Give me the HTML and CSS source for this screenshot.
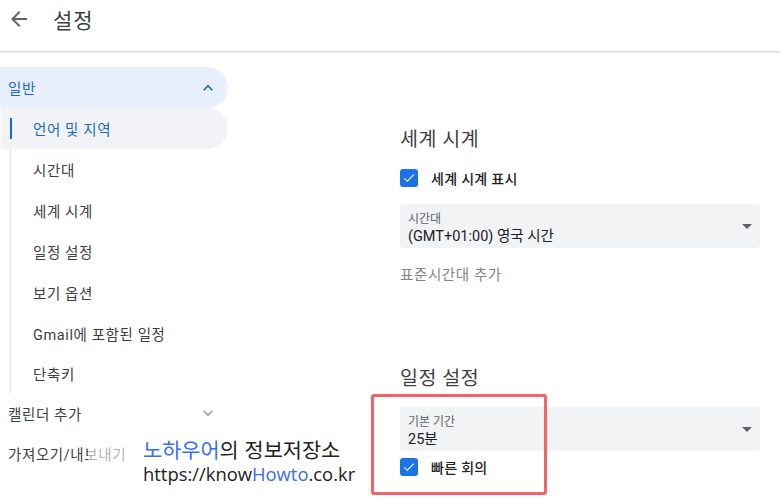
FILE: index.html
```html
<!DOCTYPE html>
<html lang="ko">
<head>
<meta charset="utf-8">
<link rel="stylesheet" href="styles.css">
</head>
<body>
<header class="topbar">
  <svg class="back" width="24" height="24" viewBox="0 0 24 24"><path d="M20 11H7.830l5.590-5.590L12 4l-8 8 8 8 1.410-1.410L7.830 13H20v-2z" fill="#5f6368"/></svg>
  <h1 class="title">설정</h1>
</header>
<div class="layout">
  <nav class="sidebar">
    <div class="group-head active">
      <span>일반</span>
      <svg class="chev" width="20" height="20" viewBox="0 0 24 24"><path d="M7.41 15.41 12 10.83l4.59 4.58L18 14l-6-6-6 6z" fill="#1967d2"/></svg>
    </div>
    <div class="subs">
      <div class="sub current">언어 및 지역</div>
      <div class="sub">시간대</div>
      <div class="sub">세계 시계</div>
      <div class="sub">일정 설정</div>
      <div class="sub">보기 옵션</div>
      <div class="sub">Gmail에 포함된 일정</div>
      <div class="sub">단축키</div>
    </div>
    <div class="group-head plain">
      <span>캘린더 추가</span>
      <svg class="chev" width="20" height="20" viewBox="0 0 24 24"><path d="M7.41 8.59 12 13.17l4.59-4.58L18 10l-6 6-6-6z" fill="#9aa0a6"/></svg>
    </div>
    <div class="group-head plain">
      <span>가져오기/내보내기</span>
    </div>
  </nav>
  <main class="content">
    <section class="sec sec-world">
      <h2 class="sec-title">세계 시계</h2>
      <label class="check">
        <span class="box"><svg width="14" height="14" viewBox="0 0 24 24"><path d="M9 16.2 4.8 12l-1.4 1.4L9 19 21 7l-1.4-1.4z" fill="#fff"/></svg></span>
        <span class="check-label">세계 시계 표시</span>
      </label>
      <div class="select-row">
        <div class="select">
          <div class="sel-text">
            <div class="sel-label">시간대</div>
            <div class="sel-value">(GMT+01:00) 영국 시간</div>
          </div>
          <span class="caret"></span>
        </div>
        <svg class="close" width="18" height="18" viewBox="0 0 24 24"><path d="M19 6.41 17.59 5 12 10.59 6.41 5 5 6.41 10.59 12 5 17.59 6.41 19 12 13.41 17.59 19 19 17.59 13.41 12z" fill="#5f6368"/></svg>
      </div>
      <div class="add-link">표준시간대 추가</div>
    </section>
    <section class="sec sec-event">
      <h2 class="sec-title">일정 설정</h2>
      <div class="select">
        <div class="sel-text">
          <div class="sel-label">기본 기간</div>
          <div class="sel-value">25분</div>
        </div>
        <span class="caret"></span>
      </div>
      <label class="check check2">
        <span class="box"><svg width="14" height="14" viewBox="0 0 24 24"><path d="M9 16.2 4.8 12l-1.4 1.4L9 19 21 7l-1.4-1.4z" fill="#fff"/></svg></span>
        <span class="check-label">빠른 회의</span>
      </label>
    </section>
  </main>
</div>
<div class="highlight"></div>
<div class="watermark">
  <div class="wm1"><span class="wm-blue">노하우어</span>의 정보저장소</div>
  <div class="wm2">https://know<span class="wm-blue">Howto</span>.co.kr</div>
</div>
</body>
</html>
```
FILE: styles.css
```css
* { box-sizing: border-box; }
html, body { margin: 0; padding: 0; }
body {
  width: 780px;
  height: 501px;
  overflow: hidden;
  background: #fff;
  font-family: Roboto, "Noto Sans CJK KR", sans-serif;
  color: #3c4043;
  position: relative;
}
.topbar {
  height: 52px;
  border-bottom: 1px solid #dadce0;
  box-shadow: 0 1px 1px rgba(0,0,0,0.06);
  display: flex;
  align-items: center;
  padding-left: 7px;
  padding-bottom: 14px;
}
.back { display: block; }
.title {
  margin: 0 0 0 22px;
  font-size: 21px;
  font-weight: 400;
  color: #3c4043;
  letter-spacing: 1px;
}
.layout { display: flex; }
.sidebar {
  width: 228px;
  padding-top: 15px;
  flex: none;
}
.group-head {
  height: 41px;
  display: flex;
  align-items: center;
  justify-content: space-between;
  padding: 0 10px 0 8px;
  font-size: 14.5px;
  letter-spacing: 0.6px;
  border-radius: 0 21px 21px 0;
}
.group-head.active { background: #e8f0fe; color: #1967d2; }
.group-head.plain { color: #3c4043; height: 40px; }
.subs {
  margin-left: 10px;
  border-left: 1px solid #e3e3e3;
  position: relative;
}
.sub {
  height: 41px;
  display: flex;
  align-items: center;
  font-size: 14.5px;
  letter-spacing: 0.6px;
  color: #3c4043;
  margin-left: -10px;
  padding-left: 32px;
}
.sub:last-child { height: 39px; }
.sub.current {
  background: #f1f3f6;
  color: #1967d2;
  border-radius: 0 21px 21px 0;
  position: relative;
}
.sub.current::before {
  content: "";
  position: absolute;
  left: 9px;
  top: 10px;
  width: 2px;
  height: 21px;
  background: #1967d2;
}
.content {
  margin-left: 172px;
  width: 390px;
  padding-top: 76px;
}
.sec-title {
  margin: 0;
  font-size: 19.5px;
  font-weight: 400;
  color: #3c4043;
  line-height: 24px;
  letter-spacing: 0.5px;
}
.check {
  display: flex;
  align-items: center;
  gap: 13px;
  margin-top: 16px;
  height: 20px;
}
.box {
  width: 18px;
  height: 18px;
  border-radius: 3px;
  background: #1a73e8;
  display: flex;
  align-items: center;
  justify-content: center;
}
.check-label { font-size: 14px; font-weight: 500; color: #202124; letter-spacing: 0.3px; }
.select-row { display: flex; align-items: center; gap: 16px; margin-top: 16px; }
.select {
  width: 360px;
  height: 44px;
  background: #f1f3f4;
  border-radius: 4px;
  display: flex;
  align-items: center;
  justify-content: space-between;
  padding: 5px 8px 0;
  flex: none;
}
.sel-text { display: flex; flex-direction: column; }
.sel-label { font-size: 12px; color: #5f6368; line-height: 16px; }
.sel-value { font-size: 14.5px; color: #202124; line-height: 19px; }
.caret {
  width: 0; height: 0;
  border-left: 5px solid transparent;
  border-right: 5px solid transparent;
  border-top: 5px solid #5f6368;
  margin-top: -5px;
}
.close { flex: none; }
.add-link { margin-top: 15px; font-size: 14.5px; color: #80868b; letter-spacing: 0.6px; }
.sec-event { margin-top: 83px; }
.sec-event .select { margin-top: 16px; }
.check2 { margin-top: 6px; }
.highlight {
  position: absolute;
  left: 371px;
  top: 394px;
  width: 176px;
  height: 101px;
  border: 3px solid #f46464;
  border-radius: 3px;
}
.watermark {
  position: absolute;
  left: 88px;
  top: 434px;
  width: 272px;
  height: 58px;
  background: rgba(255,255,255,0.6);
  padding-left: 55px;
  font-family: "Noto Sans CJK KR", sans-serif;
  color: #222;
}
.wm1 { font-size: 20.8px; line-height: 30px; }
.wm2 { font-size: 18.4px; line-height: 20px; font-family: "Open Sans", "Noto Sans CJK KR", sans-serif; }
.wm-blue { color: #3a6cf4; }
```
